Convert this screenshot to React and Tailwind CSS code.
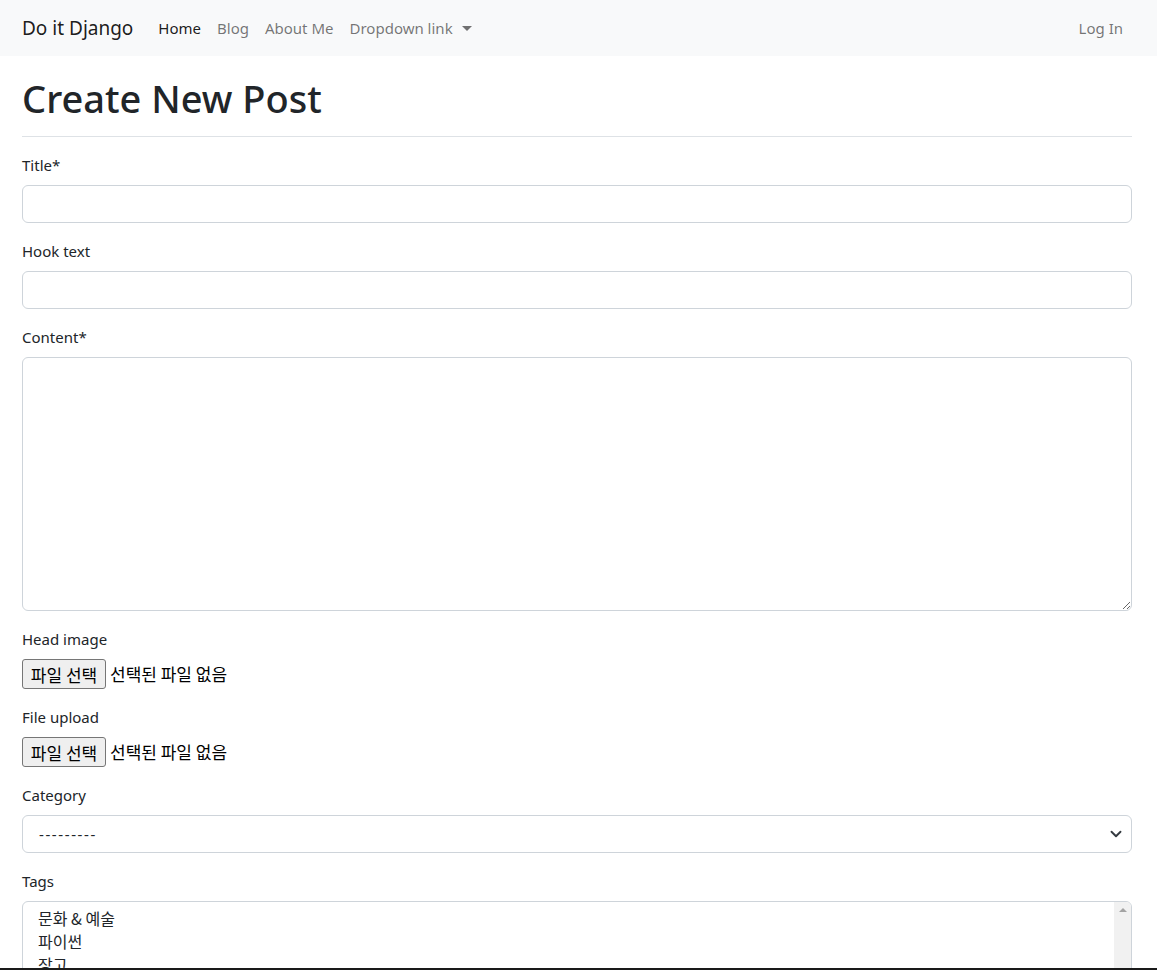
import React from 'react';

const font = { fontFamily: '"Noto Sans", "Noto Sans CJK KR", sans-serif' };
const kr = { fontFamily: '"Noto Sans CJK KR", sans-serif' };

function Label({ children }) {
  return <label className="block text-[15px] leading-6 text-[#212529] mb-2">{children}</label>;
}

function FileField({ label }) {
  return (
    <div className="mb-4">
      <Label>{label}</Label>
      <div className="flex items-center h-[30px]" style={kr}>
        <button className="h-[30px] w-[84px] bg-[#efefef] border border-[#767676] rounded-[3px] text-[17px] leading-none text-black">
          파일 선택
        </button>
        <span className="ml-1 text-[17px] text-black">선택된 파일 없음</span>
      </div>
    </div>
  );
}

export default function App() {
  return (
    <div className="h-screen overflow-hidden bg-white border-b-2 border-[#1a1a1a]" style={font}>
      {/* Navbar */}
      <nav className="h-14 bg-[#f8f9fa] flex items-center pl-[22px] pr-[34px]">
        <a className="text-[19px] text-[rgba(0,0,0,0.9)] mr-[17px]">Do it Django</a>
        <ul className="flex items-center text-[15px]">
          <li className="px-2 text-[rgba(0,0,0,0.9)]">Home</li>
          <li className="px-2 text-[rgba(0,0,0,0.55)]">Blog</li>
          <li className="px-2 text-[rgba(0,0,0,0.55)]">About Me</li>
          <li className="px-2 text-[rgba(0,0,0,0.55)] flex items-center">
            Dropdown link
            <span className="ml-[9px] inline-block w-0 h-0 border-l-[5px] border-r-[5px] border-t-[5px] border-l-transparent border-r-transparent border-t-[rgba(0,0,0,0.55)]"></span>
          </li>
        </ul>
        <div className="ml-auto text-[15px] text-[rgba(0,0,0,0.55)]">Log In</div>
      </nav>

      {/* Content */}
      <main className="pl-[22px] pr-[25px]">
        <h1 className="pt-5 text-[38px] leading-[44px] font-medium text-[#212529]">Create New Post</h1>
        <hr className="my-4 border-t border-[#dee2e6]" />

        <div className="mb-4">
          <Label>Title*</Label>
          <input className="block w-full h-[38px] border border-[#ced4da] rounded-md px-3 bg-white" />
        </div>

        <div className="mb-4">
          <Label>Hook text</Label>
          <input className="block w-full h-[38px] border border-[#ced4da] rounded-md px-3 bg-white" />
        </div>

        <div className="mb-4">
          <Label>Content*</Label>
          <textarea className="block w-full h-[254px] border border-[#ced4da] rounded-md px-3 py-1.5 bg-white resize-y"></textarea>
        </div>

        <FileField label="Head image" />
        <FileField label="File upload" />

        <div className="mb-4">
          <Label>Category</Label>
          <div className="flex items-center justify-between h-[38px] border border-[#ced4da] rounded-md pl-4 pr-[9px] bg-white text-[15px] text-[#212529]">
            <span className="tracking-[1.6px]">---------</span>
            <svg width="12" height="12" viewBox="0 0 16 16">
              <path d="M2 5l6 6 6-6" fill="none" stroke="#343a40" strokeWidth="2.5" strokeLinecap="round" strokeLinejoin="round" />
            </svg>
          </div>
        </div>

        <div className="mb-4">
          <Label>Tags</Label>
          <div className="flex h-[120px] border border-[#ced4da] rounded-md bg-white overflow-hidden" style={kr}>
            <div className="flex-1 pl-[15px] pt-[5px] text-[16px] leading-[23px] text-[#212529]">
              <div>문화 &amp; 예술</div>
              <div>파이썬</div>
              <div>장고</div>
            </div>
            <div className="w-[17px] bg-[#f1f1f1] flex justify-center pt-[6px]">
              <span className="inline-block w-0 h-0 border-l-[4px] border-r-[4px] border-b-[4px] border-l-transparent border-r-transparent border-b-[#a3a3a3]"></span>
            </div>
          </div>
        </div>
      </main>
    </div>
  );
}
